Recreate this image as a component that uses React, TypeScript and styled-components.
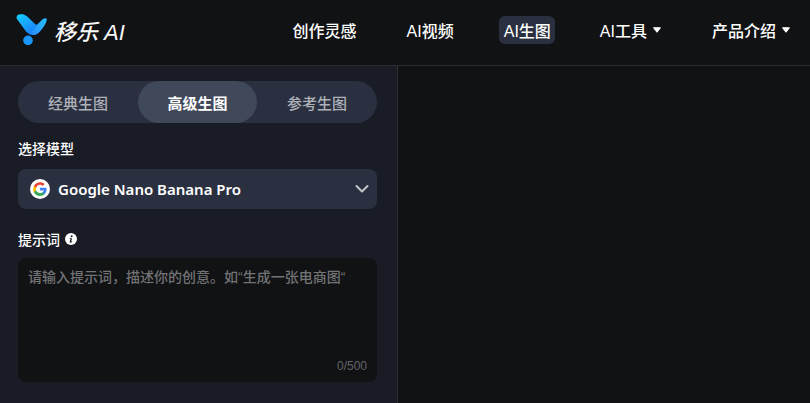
import React from "react";
import styled, { createGlobalStyle } from "styled-components";

const Global = createGlobalStyle`
  html, body { margin: 0; padding: 0; height: 100%; overflow: hidden; background: #111214; }
  * { box-sizing: border-box; }
  #root { height: 403px; }
`;

const FONT = `"Liberation Sans", "Noto Sans CJK SC", sans-serif`;

const Page = styled.div`
  width: 810px;
  height: 403px;
  display: flex;
  flex-direction: column;
  background: #111214;
  font-family: ${FONT};
  color: #fff;
  overflow: hidden;
`;

const Header = styled.header`
  height: 66px;
  flex: none;
  display: flex;
  align-items: center;
  justify-content: space-between;
  border-bottom: 1px solid #2a2b2f;
  padding: 0 15.5px 5px 16px;
`;

const Brand = styled.div`
  display: flex;
  align-items: center;
  gap: 7px;
`;

const BrandName = styled.span`
  font-size: 22px;
  font-style: italic;
  font-weight: 500;
  color: #f8f8f8;
  white-space: nowrap;
`;

const Nav = styled.nav`
  display: flex;
  align-items: center;
`;

const NavItem = styled.div<{ $active?: boolean; $gap: number }>`
  display: flex;
  align-items: center;
  gap: 6px;
  height: 28px;
  padding: 0 4.5px;
  margin-left: ${(p) => p.$gap}px;
  border-radius: 6px;
  font-size: 16px;
  font-weight: 500;
  color: #fff;
  white-space: nowrap;
  background: ${(p) => (p.$active ? "#2a3040" : "transparent")};
`;

const Body = styled.main`
  flex: 1;
  display: flex;
  min-height: 0;
`;

const Sidebar = styled.aside`
  width: 398px;
  flex: none;
  background: #191c25;
  border-right: 1px solid #2d2f35;
  padding: 15px 20px 0 18px;
  display: flex;
  flex-direction: column;
`;

const Tabs = styled.div`
  display: grid;
  grid-template-columns: 120px 119px 120px;
  height: 42px;
  border-radius: 21px;
  background: #2a3040;
`;

const Tab = styled.div<{ $active?: boolean }>`
  display: flex;
  align-items: center;
  justify-content: center;
  border-radius: 21px;
  font-size: 15px;
  font-weight: ${(p) => (p.$active ? 700 : 500)};
  color: ${(p) => (p.$active ? "#fff" : "#aeb1b8")};
  background: ${(p) => (p.$active ? "#404959" : "transparent")};
`;

const FieldLabel = styled.div<{ $top: number; $bottom: number }>`
  display: flex;
  align-items: center;
  gap: 5px;
  height: 20px;
  margin-top: ${(p) => p.$top}px;
  margin-bottom: ${(p) => p.$bottom}px;
  font-size: 14px;
  font-weight: 500;
  color: #fff;
`;

const Select = styled.div`
  height: 40px;
  display: flex;
  align-items: center;
  gap: 8px;
  padding: 0 8px 0 12px;
  border-radius: 8px;
  background: #2a3040;
`;

const ModelName = styled.span`
  flex: 1;
  font-family: "Noto Sans", sans-serif;
  font-size: 15px;
  font-weight: 600;
  color: #fff;
`;

const PromptBox = styled.div`
  position: relative;
  height: 124px;
  border-radius: 8px;
  background: #111214;
  padding: 9px 10px;
  font-size: 14px;
  font-weight: 500;
  line-height: 20px;
  color: #727375;
`;

const Counter = styled.span`
  position: absolute;
  right: 10px;
  bottom: 9px;
  font-size: 12px;
  font-weight: 400;
  line-height: 14px;
  color: #626367;
`;

const Canvas = styled.section`
  flex: 1;
  background: #111214;
`;

const Logo = () => (
  <svg width="31" height="33" viewBox="0 0 31 33" aria-hidden="true">
    <defs>
      <linearGradient id="lg1" x1="0" y1="0" x2="1" y2="1">
        <stop offset="0" stopColor="#14d2ff" />
        <stop offset="0.7" stopColor="#1a80fa" />
        <stop offset="1" stopColor="#1a6ef6" />
      </linearGradient>
      <linearGradient id="lg2" x1="1" y1="0" x2="0" y2="1">
        <stop offset="0" stopColor="#27c0fd" />
        <stop offset="1" stopColor="#2a8cf9" />
      </linearGradient>
    </defs>
    <path d="M0.6 4.5 C0.3 2 1.5 0.3 4.5 0.2 C7 0 9 0.6 11 2.2 L19 10 C20 11 21 11 22 10 L26.5 5.5 C27.8 4.4 29.5 4.2 30.6 4.8 C30.9 7 29.5 10 27 13.5 C24.5 17 21.5 20.8 17.5 21 C14 21.2 12 19.5 10 17.5 Z" fill="url(#lg1)" />
    <path d="M15 18.5 C18 15.5 20 13 22 10 L26.5 5.5 C27.8 4.4 29.5 4.2 30.6 4.8 C30.9 7 29.5 10 27 13.5 C24.5 17 21.5 20.8 17.5 21 C16.5 21 15.5 20 15 18.5 Z" fill="url(#lg2)" />
    <circle cx="12" cy="26.4" r="4.8" fill="#1a97fb" />
  </svg>
);

const GoogleIcon = () => (
  <svg width="20" height="20" viewBox="0 0 20 20" aria-hidden="true">
    <circle cx="10" cy="10" r="10" fill="#fff" />
    <g transform="translate(2.5 2.5) scale(0.3125)">
      <path fill="#4285F4" d="M45.1 24.5c0-1.6-.1-3.1-.4-4.5H24v8.5h11.8c-.5 2.8-2.1 5.1-4.4 6.7v5.5h7.1c4.2-3.8 6.6-9.5 6.6-16.2z" />
      <path fill="#34A853" d="M24 46c5.9 0 10.9-2 14.5-5.3l-7.1-5.5c-2 1.3-4.5 2.1-7.4 2.1-5.7 0-10.5-3.8-12.2-9H4.5v5.7C8.1 41.1 15.5 46 24 46z" />
      <path fill="#FBBC05" d="M11.8 28.3c-.4-1.3-.7-2.8-.7-4.3s.3-3 .7-4.3V14H4.5C3 17 2.2 20.4 2.2 24s.8 7 2.3 10l7.3-5.7z" />
      <path fill="#EA4335" d="M24 10.7c3.2 0 6.1 1.1 8.4 3.3l6.3-6.3C34.9 4.2 29.9 2 24 2 15.5 2 8.1 6.9 4.5 14l7.3 5.7c1.7-5.2 6.5-9 12.2-9z" />
    </g>
  </svg>
);

const Chevron = () => (
  <svg width="14" height="14" viewBox="0 0 14 14" aria-hidden="true">
    <path d="M1.5 4 L7 9.5 L12.5 4" fill="none" stroke="#c3c5ca" strokeWidth="2" strokeLinecap="round" strokeLinejoin="round" />
  </svg>
);

const Caret = () => (
  <svg width="8" height="6" viewBox="0 0 8 6" aria-hidden="true">
    <path d="M0.8 0.8 H7.2 L4 5 Z" fill="#fff" stroke="#fff" strokeWidth="1.2" strokeLinejoin="round" />
  </svg>
);

const InfoIcon = () => (
  <svg width="12" height="12" viewBox="0 0 12 12" aria-hidden="true">
    <circle cx="6" cy="6" r="6" fill="#fff" />
    <circle cx="6.6" cy="3.2" r="1" fill="#191c25" />
    <path d="M4.8 5.2 H7 L6.2 8.6 H7.2 L7 9.5 H4.6 L5.4 6 H4.6 Z" fill="#191c25" />
  </svg>
);

export default function App() {
  return (
    <Page>
      <Global />
      <Header>
        <Brand>
          <Logo />
          <BrandName>移乐 AI</BrandName>
        </Brand>
        <Nav>
          <NavItem $gap={0}>创作灵感</NavItem>
          <NavItem $gap={41}>AI视频</NavItem>
          <NavItem $gap={41} $active>AI生图</NavItem>
          <NavItem $gap={40}>AI工具<Caret /></NavItem>
          <NavItem $gap={42}>产品介绍<Caret /></NavItem>
        </Nav>
      </Header>
      <Body>
        <Sidebar>
          <Tabs>
            <Tab>经典生图</Tab>
            <Tab $active>高级生图</Tab>
            <Tab>参考生图</Tab>
          </Tabs>
          <FieldLabel $top={15} $bottom={11}>选择模型</FieldLabel>
          <Select>
            <GoogleIcon />
            <ModelName>Google Nano Banana Pro</ModelName>
            <Chevron />
          </Select>
          <FieldLabel $top={20} $bottom={9}>提示词<InfoIcon /></FieldLabel>
          <PromptBox>
            请输入提示词，描述你的创意。如“生成一张电商图“
            <Counter>0/500</Counter>
          </PromptBox>
        </Sidebar>
        <Canvas />
      </Body>
    </Page>
  );
}
